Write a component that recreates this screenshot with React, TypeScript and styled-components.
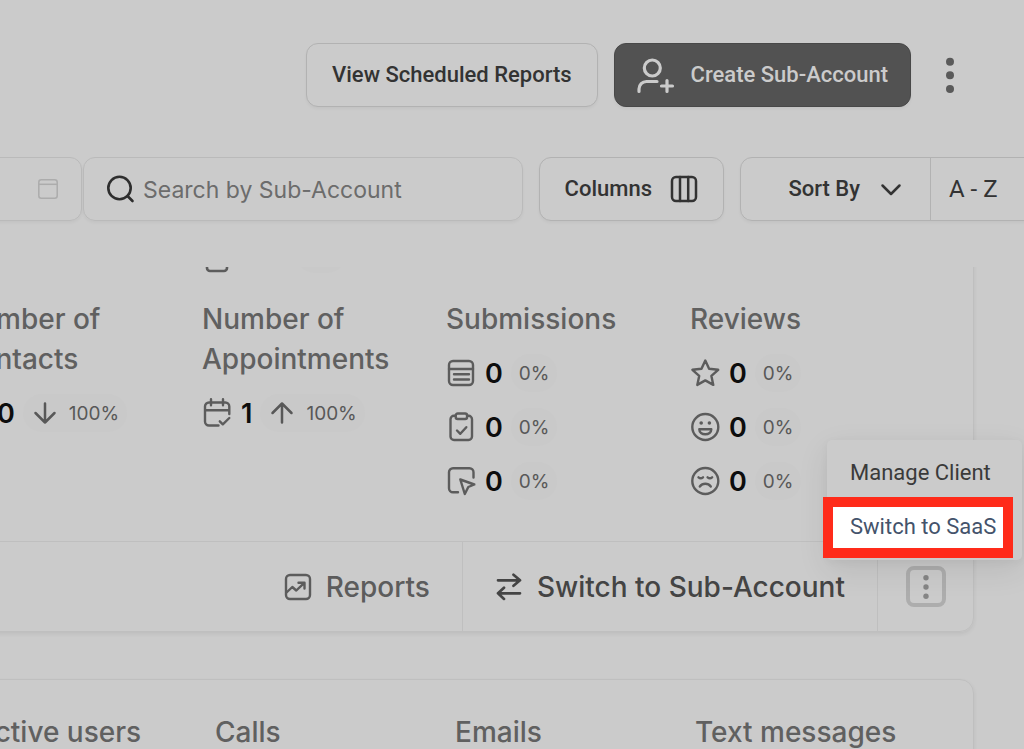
import React from 'react';
import styled, { createGlobalStyle } from 'styled-components';

const GlobalStyle = createGlobalStyle`
  *, *::before, *::after { box-sizing: border-box; }
  html, body, #root { height: 100%; }
  body { margin: 0; background: #cbcbcb; overflow: hidden; }
  button, input { font: inherit; color: inherit; }
`;

const Page = styled.div`
  display: flex;
  flex-direction: column;
  height: 100%;
  overflow: hidden;
  background: #cbcbcb;
  color: #5c5c5c;
  font-family: Inter, sans-serif;
`;

const Header = styled.header`
  display: flex;
  justify-content: flex-end;
  gap: 16px;
  padding: 43px 51px 0 0;
`;

const Button = styled.button<{ $dark?: boolean }>`
  display: flex;
  align-items: center;
  gap: ${(p) => (p.$dark ? 14 : 18)}px;
  height: 64px;
  padding: 0 ${(p) => (p.$dark ? 22 : 25)}px;
  border: 1px solid ${(p) => (p.$dark ? '#484848' : '#b2b2b2')};
  border-radius: 12px;
  background: ${(p) => (p.$dark ? '#525252' : '#cbcbcb')};
  color: ${(p) => (p.$dark ? '#cbcbcb' : '#333333')};
  box-shadow: 0 2px 3px rgba(0, 0, 0, 0.04);
  font: 500 22px/32px Roboto, sans-serif;
  white-space: nowrap;
`;

const HeaderMenuButton = styled.button`
  width: 46px;
  height: 64px;
  padding: 0;
  border: 0;
  background: none;
  color: #5a5a5a;
`;

const Toolbar = styled.div`
  display: flex;
  gap: 16px;
  margin: 50px -60px 0 -80px;
`;

const Fields = styled.div`
  display: flex;
  flex: 1;
  gap: 1px;
  min-width: 0;
`;

const Field = styled.label<{ $grow?: boolean }>`
  display: flex;
  align-items: center;
  gap: 6px;
  flex: ${(p) => (p.$grow ? '1' : '0 0 162px')};
  min-width: 0;
  height: 64px;
  padding: 0 23px;
  border: 1px solid #bababa;
  border-radius: 12px;
  box-shadow: 0 2px 3px rgba(0, 0, 0, 0.04);
`;

const TextInput = styled.input`
  flex: 1;
  min-width: 0;
  height: 34px;
  padding: 2px 0 0;
  border: 0;
  outline: 0;
  background: none;
  font: 400 23px/32px Inter, sans-serif;
  &::placeholder { color: #6c6c6c; opacity: 1; }
`;

const SortGroup = styled.div`
  display: flex;
  flex: none;
  height: 64px;
  border: 1px solid #b2b2b2;
  border-radius: 12px;
  box-shadow: 0 2px 3px rgba(0, 0, 0, 0.04);
`;

const SortButton = styled.button<{ $order?: boolean }>`
  display: flex;
  align-items: center;
  justify-content: ${(p) => (p.$order ? 'flex-start' : 'flex-end')};
  gap: 18px;
  width: ${(p) => (p.$order ? 153 : 189)}px;
  padding: 0 ${(p) => (p.$order ? 18 : 26)}px;
  border: 0;
  border-left: ${(p) => (p.$order ? '1px solid #b2b2b2' : '0')};
  background: none;
  color: #333333;
  font: ${(p) => (p.$order ? '400 24px' : '500 22px')}/32px Roboto, sans-serif;
  white-space: nowrap;
`;

const Scroll = styled.main`
  flex: 1;
  min-height: 0;
  display: flex;
  flex-direction: column;
  gap: 47px;
  margin-top: 46px;
  overflow: hidden;
`;

const Card = styled.section<{ $scrolled?: boolean }>`
  flex: none;
  margin: ${(p) => (p.$scrolled ? '-40px' : '0')} 50px 0 -80px;
  border: 1px solid #bfbfbf;
  border-radius: 14px;
  box-shadow: 0 2px 4px rgba(0, 0, 0, 0.07);
`;

const Metrics = styled.div`
  display: grid;
  grid-template-columns: repeat(4, 1fr);
  padding: 0 39px 41px 37px;
`;

const Earlier = styled.div`
  display: flex;
  align-items: flex-end;
  gap: 66px;
  height: 45px;
  padding-left: 2px;
`;

const Metric = styled.div`
  display: flex;
  flex-direction: column;
  padding: 26px 24px 0 0;
`;

const MetricTitle = styled.h2`
  margin: 0;
  font: 500 28px/40px Inter, sans-serif;
  color: #606060;
`;

const StatList = styled.div`
  display: flex;
  flex-direction: column;
  gap: 16px;
  margin-top: 15px;
`;

const Stat = styled.div`
  display: flex;
  align-items: center;
  height: 38px;
  white-space: nowrap;
`;

const Count = styled.strong`
  margin: 0 8px 0 9px;
  padding-top: 2px;
  font: 600 27px/38px Inter, sans-serif;
  color: #0d0d0d;
`;

const Change = styled.span`
  display: flex;
  align-items: center;
  gap: 10px;
  height: 38px;
  padding: 0 8px;
  border-radius: 19px;
  background: #c9c9c9;
  font: 400 19px/38px Inter, sans-serif;
  color: #585858;
`;

const ChangeText = styled.span`
  padding-top: 2px;
`;

const EarlierBadge = styled(Change)`
  width: 50px;
`;

const CardFooter = styled.footer`
  display: flex;
  justify-content: flex-end;
  height: 90px;
  border-top: 1px solid #bfbfbf;
`;

const FooterButton = styled.button<{ $strong?: boolean }>`
  display: flex;
  align-items: center;
  gap: 14px;
  padding: 0 32px;
  border: 0;
  border-left: ${(p) => (p.$strong ? '1px solid #bfbfbf' : '0')};
  background: none;
  color: ${(p) => (p.$strong ? '#444444' : '#5c5c5c')};
  font: 500 28px/40px Inter, sans-serif;
  white-space: nowrap;
`;

const MoreCell = styled.div`
  position: relative;
  display: flex;
  align-items: center;
  justify-content: center;
  width: 96px;
  border-left: 1px solid #bfbfbf;
`;

const MoreButton = styled.button`
  display: flex;
  align-items: center;
  justify-content: center;
  width: 40px;
  height: 41px;
  padding: 0;
  border: 4px solid #adadad;
  border-radius: 8px;
  background: none;
  color: #858585;
`;

const Menu = styled.div`
  position: absolute;
  right: -49px;
  bottom: 71px;
  width: 195px;
  padding: 6px 0;
  border-radius: 5px;
  background: #cbcbcb;
  box-shadow: 0 10px 32px rgba(0, 0, 0, 0.09), 0 2px 8px rgba(0, 0, 0, 0.04);
`;

const MenuItem = styled.button<{ $marked?: boolean }>`
  position: relative;
  display: block;
  width: 100%;
  height: 54px;
  padding: 0 0 0 23px;
  border: 0;
  background: none;
  color: ${(p) => (p.$marked ? '#44536b' : '#3a3a3a')};
  font: 400 22px/54px Roboto, sans-serif;
  text-align: left;
  white-space: nowrap;
`;

const Marker = styled.span`
  position: absolute;
  inset: -3px 9px -4px -4px;
  border: 10px solid #ff2b1a;
  background: #ffffff;
`;

const MenuLabel = styled.span`
  position: relative;
`;

const UsageGrid = styled.div`
  display: grid;
  grid-template-columns: repeat(4, 1fr);
  padding: 32px 38px 40px 54px;
`;

type IconProps = { size?: number; width?: number; children: React.ReactNode };

const Icon = ({ size = 30, width = 2.4, children }: IconProps) => (
  <svg
    width={size}
    height={size}
    viewBox={`0 0 ${size} ${size}`}
    fill="none"
    stroke="currentColor"
    strokeWidth={width}
    strokeLinecap="round"
    strokeLinejoin="round"
    aria-hidden="true"
  >
    {children}
  </svg>
);

const UserPlusIcon = () => (
  <Icon size={40} width={3.2}>
    <circle cx="15.3" cy="13" r="8" />
    <path d="M2 36.5V34a7.5 7.5 0 0 1 7.5-7.5h10.500M30 25.500v11M24.500 31h11" />
  </Icon>
);

const HeaderDots = () => (
  <svg width="46" height="64" viewBox="0 0 46 64" fill="currentColor" aria-hidden="true">
    <circle cx="23" cy="18.7" r="4" />
    <circle cx="23" cy="32.3" r="4" />
    <circle cx="23" cy="46" r="4" />
  </svg>
);

const SmallDots = () => (
  <svg width="24" height="28" viewBox="0 0 24 28" fill="currentColor" aria-hidden="true">
    <circle cx="12" cy="4.7" r="2.7" />
    <circle cx="12" cy="14" r="2.7" />
    <circle cx="12" cy="23.3" r="2.7" />
  </svg>
);

const CalendarIcon = () => (
  <svg width="20" height="20" viewBox="0 0 20 20" fill="none" stroke="#acacac" strokeWidth="1.5" aria-hidden="true">
    <rect x="0.8" y="0.8" width="18.4" height="18.4" rx="2.5" />
    <path d="M1 5.3h18" />
  </svg>
);

const SearchIcon = () => (
  <svg
    width="30"
    height="30"
    viewBox="0 0 30 30"
    fill="none"
    stroke="#2e2e2e"
    strokeWidth="2.6"
    strokeLinecap="round"
    aria-hidden="true"
  >
    <circle cx="12.5" cy="14" r="11.2" />
    <path d="m20.500 22 5 5" />
  </svg>
);

const ColumnsIcon = () => (
  <Icon size={28} width={2.5}>
    <rect x="2" y="2" width="24" height="24" rx="4" />
    <path d="M10 2v24M18.2 2v24" />
  </Icon>
);

const ChevronIcon = () => (
  <Icon size={26} width={2.5}>
    <path d="m4.5 9.5 8.5 8.5 8.5-8.5" />
  </Icon>
);

const ArrowIcon = ({ up }: { up?: boolean }) => (
  <Icon size={28} width={2.5}>
    <path d={up ? 'M14 23.5v-19M4.5 14 14 4.5l9.5 9.5' : 'M14 4.5v19M4.5 14l9.5 9.5 9.5-9.5'} />
  </Icon>
);

const CalendarCheckIcon = () => (
  <Icon>
    <path d="M27.3 16V8.500a4 4 0 0 0-4-4H7a4 4 0 0 0-4 4V23.500a4 4 0 0 0 4 4h9.500M3 12.300h24M9 1.300v6M21 1.300v6M17.800 23.300l3 3 6.500-6.300" />
  </Icon>
);

const FormIcon = () => (
  <Icon>
    <rect x="3" y="3" width="24" height="24" rx="4" />
    <path d="M3 11h24M8 16.2h15M8 21.500h15" />
  </Icon>
);

const ClipboardIcon = () => (
  <Icon>
    <path d="M9.500 3.800H8a3.500 3.500 0 0 0-3.500 3.500v17.200A3.500 3.500 0 0 0 8 28h14.500a3.500 3.500 0 0 0 3.500-3.500V7.300a3.500 3.500 0 0 0-3.500-3.500H21" />
    <rect x="9.700" y="1.500" width="11.400" height="5.500" rx="2" />
    <path d="m11 18.500 3.300 3.300 6-6.600" />
  </Icon>
);

const ClickIcon = () => (
  <Icon>
    <path d="M27.500 11.500V6.300a4 4 0 0 0-4-4H7a4 4 0 0 0-4 4v16a4 4 0 0 0 4 4h5" />
    <path d="m14.300 13.500 14 5-6 2.500-3.500 7z" />
  </Icon>
);

const StarIcon = () => (
  <Icon>
    <path d="m15.300 2.500 3.800 8.300 9.100 1-6.800 6.100 1.900 9-8-4.500-8 4.500 1.900-9-6.800-6.100 9.100-1z" />
  </Icon>
);

const SmileIcon = () => (
  <Icon>
    <circle cx="15.300" cy="15" r="13" />
    <circle cx="11.200" cy="11" r="1.800" fill="currentColor" stroke="none" />
    <circle cx="19.400" cy="11" r="1.800" fill="currentColor" stroke="none" />
    <path d="M9.300 17.200h12c0 3.300-2.700 5-6 5s-6-1.700-6-5z" />
  </Icon>
);

const SadIcon = () => (
  <Icon>
    <circle cx="15.300" cy="15" r="13" />
    <path d="M8.500 11.300c1.300 1.100 3.200 1.100 4.500 0M17.600 11.300c1.300 1.100 3.200 1.100 4.500 0M9.800 20.500c2.800-3.700 8.200-3.700 11 0" />
  </Icon>
);

const ReportsIcon = () => (
  <Icon size={28}>
    <rect x="2" y="2" width="24" height="24" rx="4" />
    <path d="m2.500 19.500 5.800-5.500 4 3.500 8-7.700M14.500 9.700h6v5.800" />
  </Icon>
);

const SwapIcon = () => (
  <Icon size={28} width={2.7}>
    <path d="M3 7.300h22M18.500 1.700 25 7.300l-6.500 5.500M25 20.300H3M9 14.700l-6 5.600 6 5.600" />
  </Icon>
);

const StatRow = ({ icon, count, change, trend }: {
  icon: React.ReactNode;
  count: number;
  change: string;
  trend?: 'up' | 'down';
}) => (
  <Stat>
    {icon}
    <Count>{count}</Count>
    <Change>
      {trend && <ArrowIcon up={trend === 'up'} />}
      <ChangeText>{change}</ChangeText>
    </Change>
  </Stat>
);

export default function App() {
  return (
    <>
      <GlobalStyle />
      <Page>
        <Header>
          <Button>View Scheduled Reports</Button>
          <Button $dark>
            <UserPlusIcon />
            Create Sub-Account
          </Button>
          <HeaderMenuButton aria-label="More options">
            <HeaderDots />
          </HeaderMenuButton>
        </Header>

        <Toolbar>
          <Fields>
            <Field>
              <TextInput aria-label="Date range" />
              <CalendarIcon />
            </Field>
            <Field $grow>
              <SearchIcon />
              <TextInput aria-label="Search" placeholder="Search by Sub-Account" />
            </Field>
          </Fields>
          <Button>
            Columns
            <ColumnsIcon />
          </Button>
          <SortGroup>
            <SortButton>
              Sort By
              <ChevronIcon />
            </SortButton>
            <SortButton $order>A - Z</SortButton>
          </SortGroup>
        </Toolbar>

        <Scroll>
          <Card $scrolled>
            <Metrics>
              <Earlier />
              <Earlier>
                <Icon size={26} width={2.6}>
                  <rect x="3" y="3" width="20" height="21" rx="3" />
                </Icon>
                <EarlierBadge />
              </Earlier>
              <Earlier />
              <Earlier />
              <Metric>
                <MetricTitle>Number of Contacts</MetricTitle>
                <StatList>
                  <StatRow icon={<FormIcon />} count={0} change="100%" trend="down" />
                </StatList>
              </Metric>
              <Metric>
                <MetricTitle>Number of Appointments</MetricTitle>
                <StatList>
                  <StatRow icon={<CalendarCheckIcon />} count={1} change="100%" trend="up" />
                </StatList>
              </Metric>
              <Metric>
                <MetricTitle>Submissions</MetricTitle>
                <StatList>
                  <StatRow icon={<FormIcon />} count={0} change="0%" />
                  <StatRow icon={<ClipboardIcon />} count={0} change="0%" />
                  <StatRow icon={<ClickIcon />} count={0} change="0%" />
                </StatList>
              </Metric>
              <Metric>
                <MetricTitle>Reviews</MetricTitle>
                <StatList>
                  <StatRow icon={<StarIcon />} count={0} change="0%" />
                  <StatRow icon={<SmileIcon />} count={0} change="0%" />
                  <StatRow icon={<SadIcon />} count={0} change="0%" />
                </StatList>
              </Metric>
            </Metrics>
            <CardFooter>
              <FooterButton>
                <ReportsIcon />
                Reports
              </FooterButton>
              <FooterButton $strong>
                <SwapIcon />
                Switch to Sub-Account
              </FooterButton>
              <MoreCell>
                <MoreButton aria-label="More actions">
                  <SmallDots />
                </MoreButton>
                <Menu>
                  <MenuItem>Manage Client</MenuItem>
                  <MenuItem $marked>
                    <Marker />
                    <MenuLabel>Switch to SaaS</MenuLabel>
                  </MenuItem>
                </Menu>
              </MoreCell>
            </CardFooter>
          </Card>

          <Card>
            <UsageGrid>
              <MetricTitle>Active users</MetricTitle>
              <MetricTitle>Calls</MetricTitle>
              <MetricTitle>Emails</MetricTitle>
              <MetricTitle>Text messages</MetricTitle>
            </UsageGrid>
          </Card>
        </Scroll>
      </Page>
    </>
  );
}
